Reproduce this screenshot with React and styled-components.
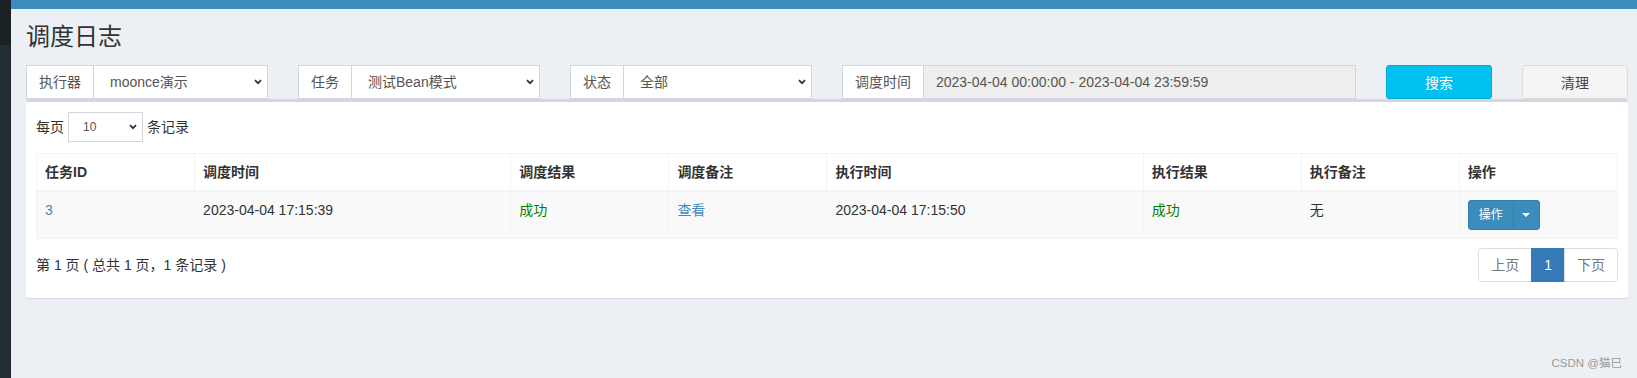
import React from 'react'
import styled, { createGlobalStyle } from 'styled-components'

const GlobalStyle = createGlobalStyle`
  html, body { margin: 0; padding: 0; }
  body {
    font-family: "Liberation Sans", Arial, "Noto Sans CJK SC", sans-serif;
    font-size: 14px;
    line-height: 20px;
    color: #333;
    background: #ecf0f5;
  }
  * { box-sizing: border-box; }
`

const Wrapper = styled.div`
  display: flex;
  min-height: 100vh;
  position: relative;
`
const Sidebar = styled.aside`
  width: 11px;
  flex: none;
  display: flex;
  flex-direction: column;
  background: #222d32;
`
const SidebarLogo = styled.div`
  height: 45px;
  background: #1a2226;
`
const Main = styled.div`
  flex: 1;
  min-width: 0;
  display: flex;
  flex-direction: column;
  background: #ecf0f5;
`
const TopBar = styled.div`
  height: 9px;
  background: #3c8dbc;
`
const PageHeader = styled.section`
  padding: 15px 9px 0 15px;
`
const Title = styled.h1`
  margin: 0;
  font-size: 24px;
  line-height: 26px;
  font-weight: 400;
  color: #333;
`
const Content = styled.section`
  padding: 15px 9px 15px 15px;
`
const FilterRow = styled.div`
  display: flex;
  margin: 0 -15px;
`
const Col = styled.div`
  flex: 0 0 ${p => (p.$span / 12) * 100}%;
  padding: 0 15px;
`
const InputGroup = styled.div`
  display: flex;
  height: 34px;
`
const Addon = styled.span`
  padding: 6px 12px;
  border: 1px solid #d2d6de;
  border-right: 0;
  background: #fff;
  color: #555;
  white-space: nowrap;
`
const SelectWrap = styled.div`
  position: relative;
  flex: 1;
  min-width: 0;
  display: flex;
`
const Select = styled.select`
  appearance: none;
  width: 100%;
  height: ${p => (p.$small ? '30px' : '34px')};
  padding: ${p => (p.$small ? '5px 20px 5px 14px' : '6px 20px 6px 16px')};
  border: 1px solid #d2d6de;
  border-radius: 0;
  background: #fff;
  color: #555;
  font-family: inherit;
  font-size: ${p => (p.$small ? '12px' : '14px')};
  line-height: 18px;
  outline: none;
`
const Chevron = styled.svg`
  position: absolute;
  right: 6px;
  top: 50%;
  margin-top: -3px;
  pointer-events: none;
`
const DateInput = styled.input`
  flex: 1;
  min-width: 0;
  height: 34px;
  padding: 6px 12px;
  border: 1px solid #d2d6de;
  background: #eee;
  color: #555;
  font-family: inherit;
  font-size: 14px;
  outline: none;
`
const Button = styled.button`
  width: 100%;
  height: 34px;
  border-radius: 3px;
  font-family: inherit;
  font-size: 14px;
  border: 1px solid ${p => (p.$primary ? '#00acd6' : '#ddd')};
  background: ${p => (p.$primary ? '#00c0ef' : '#f4f4f4')};
  color: ${p => (p.$primary ? '#fff' : '#444')};
`
const Box = styled.div`
  background: #fff;
  border-top: 3px solid #d2d6de;
  border-radius: 3px;
  box-shadow: 0 1px 1px rgba(0, 0, 0, 0.1);
  padding: 10px;
`
const LengthRow = styled.div`
  display: flex;
  align-items: center;
  gap: 4px;
`
const SmallSelectWrap = styled(SelectWrap)`
  flex: none;
  width: 75px;
`
const Table = styled.table`
  width: 100%;
  margin-top: 11px;
  border-collapse: collapse;
  table-layout: fixed;
  border: 1px solid #f4f4f4;

  th, td {
    padding: 8px;
    border: 1px solid #f4f4f4;
    text-align: left;
    vertical-align: top;
    line-height: 20px;
  }
  th {
    font-weight: 700;
    border-bottom-width: 2px;
  }
  tbody tr {
    background: #f9f9f9;
  }
`
const Link = styled.a`
  color: #3c8dbc;
  text-decoration: none;
`
const Success = styled.span`
  color: green;
`
const BtnGroup = styled.div`
  display: inline-flex;
  vertical-align: top;
`
const OpButton = styled.button`
  height: 30px;
  padding: 5px 10px;
  font-family: inherit;
  font-size: 12px;
  line-height: 18px;
  color: #fff;
  background: #3c8dbc;
  border: 1px solid #367fa9;
  border-radius: ${p => (p.$caret ? '0 3px 3px 0' : '3px 0 0 3px')};
  margin-left: ${p => (p.$caret ? '-1px' : '0')};
  width: ${p => (p.$caret ? '27px' : 'auto')};
  display: flex;
  align-items: center;
  justify-content: center;
`
const Caret = styled.span`
  width: 0;
  height: 0;
  border-top: 4px solid #fff;
  border-left: 4px solid transparent;
  border-right: 4px solid transparent;
`
const FooterRow = styled.div`
  display: flex;
  align-items: center;
  justify-content: space-between;
  margin: 9px 0 6px;
`
const Pagination = styled.ul`
  display: flex;
  margin: 0;
  padding: 0;
  list-style: none;
`
const PageItem = styled.li`
  padding: 6px 12px;
  line-height: 20px;
  border: 1px solid ${p => (p.$active ? '#337ab7' : '#ddd')};
  background: ${p => (p.$active ? '#337ab7' : '#fff')};
  color: ${p => (p.$active ? '#fff' : '#777')};
  margin-left: -1px;
  &:first-child {
    margin-left: 0;
    border-radius: 4px 0 0 4px;
  }
  &:last-child {
    border-radius: 0 4px 4px 0;
  }
`
const Watermark = styled.div`
  position: absolute;
  right: 15px;
  bottom: 8px;
  font-size: 11.5px;
  line-height: 14px;
  color: #999;
`

function Arrow() {
  return (
    <Chevron width="8" height="6" viewBox="0 0 8 6">
      <path d="M1 1.2 L4 4.2 L7 1.2" fill="none" stroke="#333" strokeWidth="1.8" />
    </Chevron>
  )
}

function FilterSelect({ label, options }) {
  return (
    <InputGroup>
      <Addon>{label}</Addon>
      <SelectWrap>
        <Select defaultValue={options[0]}>
          {options.map(o => (
            <option key={o}>{o}</option>
          ))}
        </Select>
        <Arrow />
      </SelectWrap>
    </InputGroup>
  )
}

const columns = [
  ['任务ID', 10],
  ['调度时间', 20],
  ['调度结果', 10],
  ['调度备注', 10],
  ['执行时间', 20],
  ['执行结果', 10],
  ['执行备注', 10],
  ['操作', 10],
]

export default function App() {
  return (
    <>
      <GlobalStyle />
      <Wrapper>
        <Sidebar>
          <SidebarLogo />
        </Sidebar>
        <Main>
          <TopBar />
          <PageHeader>
            <Title>调度日志</Title>
          </PageHeader>
          <Content>
            <FilterRow>
              <Col $span={2}>
                <FilterSelect label="执行器" options={['moonce演示']} />
              </Col>
              <Col $span={2}>
                <FilterSelect label="任务" options={['测试Bean模式']} />
              </Col>
              <Col $span={2}>
                <FilterSelect label="状态" options={['全部', '成功', '失败', '进行中']} />
              </Col>
              <Col $span={4}>
                <InputGroup>
                  <Addon>调度时间</Addon>
                  <DateInput readOnly value="2023-04-04 00:00:00 - 2023-04-04 23:59:59" />
                </InputGroup>
              </Col>
              <Col $span={1}>
                <Button $primary>搜索</Button>
              </Col>
              <Col $span={1}>
                <Button>清理</Button>
              </Col>
            </FilterRow>

            <Box>
              <LengthRow>
                <span>每页</span>
                <SmallSelectWrap>
                  <Select $small defaultValue="10">
                    <option>10</option>
                    <option>25</option>
                    <option>50</option>
                    <option>100</option>
                  </Select>
                  <Arrow />
                </SmallSelectWrap>
                <span>条记录</span>
              </LengthRow>

              <Table>
                <colgroup>
                  {columns.map(([name, w]) => (
                    <col key={name} style={{ width: `${w}%` }} />
                  ))}
                </colgroup>
                <thead>
                  <tr>
                    {columns.map(([name]) => (
                      <th key={name}>{name}</th>
                    ))}
                  </tr>
                </thead>
                <tbody>
                  <tr>
                    <td><Link href="#">3</Link></td>
                    <td>2023-04-04 17:15:39</td>
                    <td><Success>成功</Success></td>
                    <td><Link href="#">查看</Link></td>
                    <td>2023-04-04 17:15:50</td>
                    <td><Success>成功</Success></td>
                    <td>无</td>
                    <td>
                      <BtnGroup>
                        <OpButton>操作</OpButton>
                        <OpButton $caret><Caret /></OpButton>
                      </BtnGroup>
                    </td>
                  </tr>
                </tbody>
              </Table>

              <FooterRow>
                <span>第 1 页 ( 总共 1 页，1 条记录 )</span>
                <Pagination>
                  <PageItem>上页</PageItem>
                  <PageItem $active>1</PageItem>
                  <PageItem>下页</PageItem>
                </Pagination>
              </FooterRow>
            </Box>
          </Content>
        </Main>
        <Watermark>CSDN @猫巳</Watermark>
      </Wrapper>
    </>
  )
}
